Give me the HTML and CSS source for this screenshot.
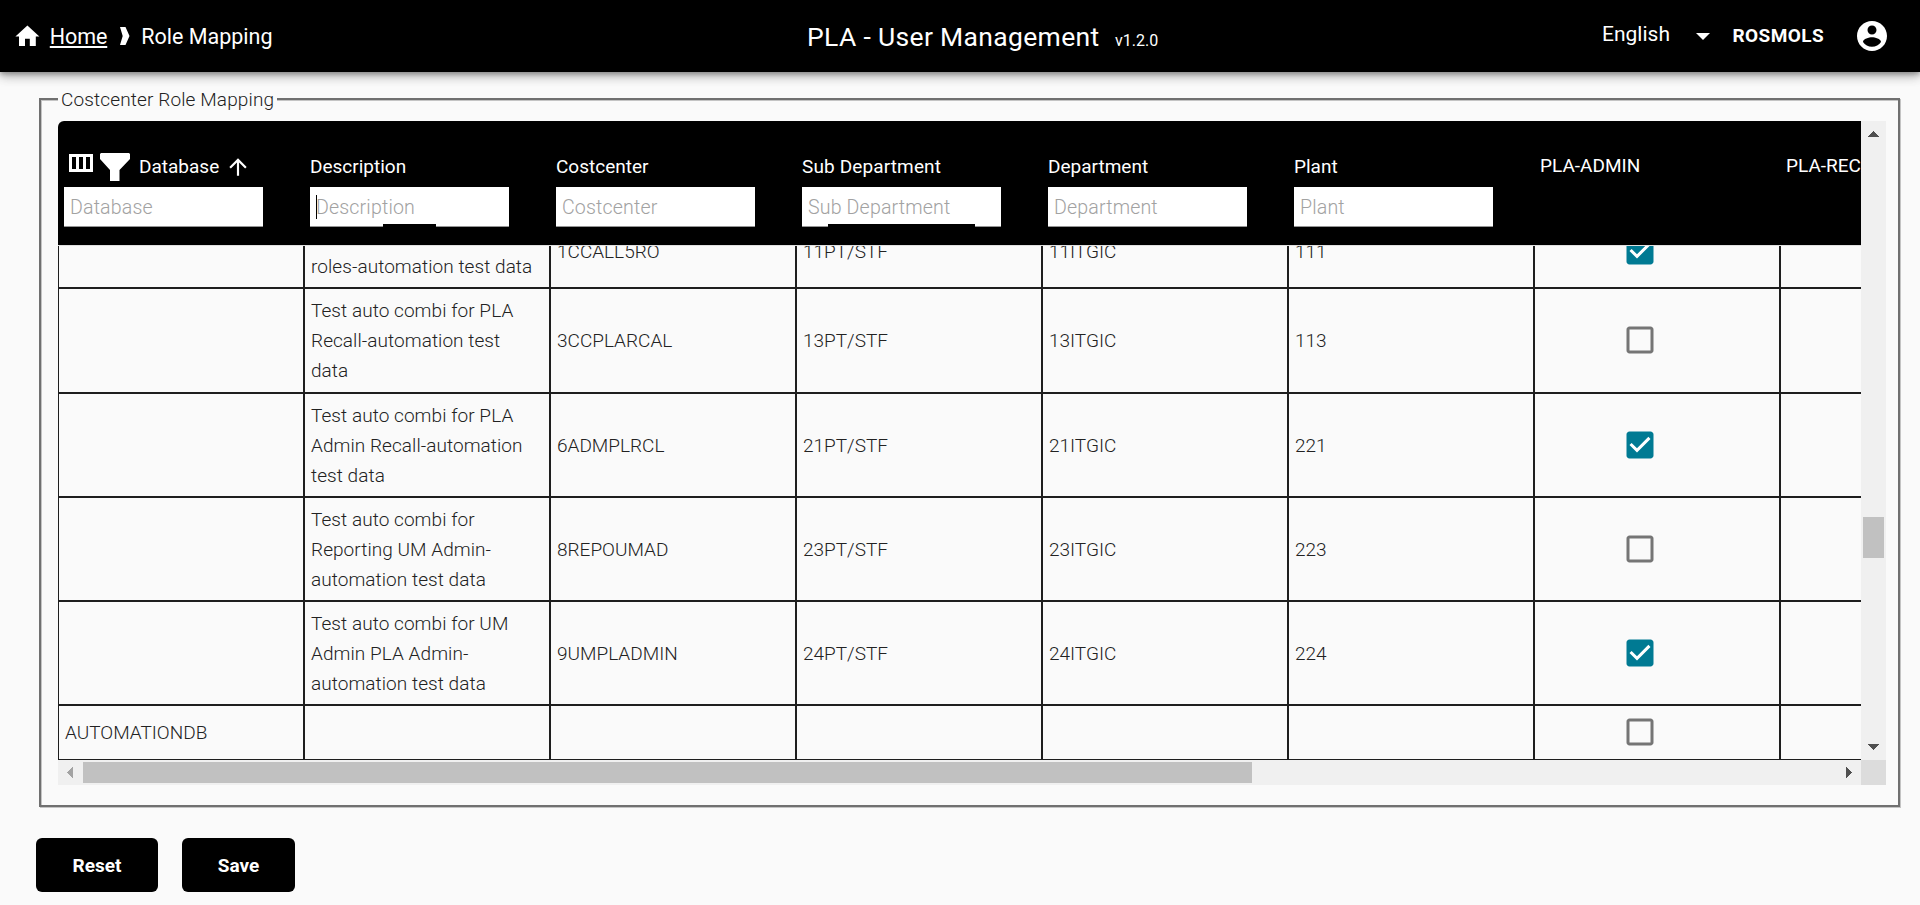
FILE: index.html
```html
<!DOCTYPE html>
<html lang="en">
<head>
<meta charset="utf-8">
<title>PLA - User Management</title>
<link rel="stylesheet" href="styles.css">
</head>
<body>
<svg width="0" height="0" class="defs">
  <symbol id="off" viewBox="0 0 24 24"><path fill="#757575" d="M19 5v14H5V5h14m0-2H5c-1.1 0-2 .9-2 2v14c0 1.1.9 2 2 2h14c1.1 0 2-.9 2-2V5c0-1.1-.9-2-2-2z"/></symbol>
  <symbol id="on" viewBox="0 0 24 24"><path fill="#fff" d="M4.500 6h15v12h-15z"/><path fill="#007a93" d="M19 3H5c-1.11 0-2 .9-2 2v14c0 1.1.89 2 2 2h14c1.11 0 2-.9 2-2V5c0-1.1-.89-2-2-2zm-9 14l-5-5 1.410-1.410L10 14.170l7.590-7.590L19 8l-9 9z"/></symbol>
</svg>
<header class="appbar">
  <nav class="crumbs">
    <svg class="home-icon" viewBox="0 0 24 24" fill="#fff"><path d="M10 20v-6h4v6h5v-8h3L12 3 2 12h3v8z"/></svg>
    <a class="crumb-link" href="#">Home</a>
    <svg class="chevron" viewBox="0 0 10 18" fill="#fff"><path d="M0 0h5.500l4 9-4 9H0l2.700-9z"/></svg>
    <span class="crumb-here">Role Mapping</span>
  </nav>
  <div class="brand"><h1 class="title">PLA - User Management</h1><span class="version">v1.2.0</span></div>
  <div class="account">
    <span class="lang">English</span>
    <svg class="caret-down" viewBox="0 0 14 7" fill="#fff"><path d="M0 0h14L7 7z"/></svg>
    <span class="user">ROSMOLS</span>
    <svg class="avatar" viewBox="0 0 24 24" fill="#fff"><path d="M12 2C6.480 2 2 6.480 2 12s4.480 10 10 10 10-4.480 10-10S17.520 2 12 2zm0 3c1.660 0 3 1.340 3 3s-1.340 3-3 3-3-1.340-3-3 1.340-3 3-3zm0 14.200c-2.500 0-4.710-1.280-6-3.220.030-1.990 4-3.080 6-3.080 1.990 0 5.970 1.090 6 3.080-1.290 1.940-3.500 3.220-6 3.220z"/></svg>
  </div>
</header>

<fieldset class="panel">
  <legend class="legend">Costcenter Role Mapping</legend>
  <div class="scroller">
    <div class="table">
      <div class="thead">
        <div class="th">
          <div class="th-title">
            <svg class="cols-icon" viewBox="0 0 24 18"><path fill="#fff" fill-rule="evenodd" d="M0 0h24v18H0zM3 3v12h4V3zM10 3v12h4V3zM17 3v12h4V3z"/></svg>
            <svg class="funnel-icon" viewBox="0 0 30 28"><path fill="#fff" d="M1 0h28l1 1v5L19.500 17v11H10V17L0 6V1z"/></svg>
            <span>Database</span>
            <svg class="sort-icon" viewBox="0 0 24 24" fill="#fff"><path d="M4 12l1.410 1.410L11 7.830V20h2V7.830l5.580 5.590L20 12l-8-8-8 8z"/></svg>
          </div>
          <div class="filter">Database</div>
        </div>
        <div class="th"><div class="th-title">Description</div><div class="filter focused">Description<i class="mark mark-desc"></i></div></div>
        <div class="th"><div class="th-title">Costcenter</div><div class="filter">Costcenter</div></div>
        <div class="th"><div class="th-title th-wide">Sub Department</div><div class="filter">Sub Department<i class="mark mark-sub"></i></div></div>
        <div class="th"><div class="th-title">Department</div><div class="filter">Department</div></div>
        <div class="th"><div class="th-title">Plant</div><div class="filter">Plant</div></div>
        <div class="th th-role"><div class="th-title">PLA-ADMIN</div></div>
        <div class="th th-role"><div class="th-title">PLA-RECALL</div></div>
      </div>
      <div class="tbody">
        <div class="tr two"><div class="td"></div><div class="td"><p><br>roles-automation test data</p></div><div class="td">1CCALL5RO</div><div class="td">11PT/STF</div><div class="td">11ITGIC</div><div class="td">111</div><div class="td chk"><svg><use href="#on"/></svg></div><div class="td"></div></div>
        <div class="tr first"><div class="td"></div><div class="td"><p>Test auto combi for PLA<br>Recall-automation test<br>data</p></div><div class="td">3CCPLARCAL</div><div class="td">13PT/STF</div><div class="td">13ITGIC</div><div class="td">113</div><div class="td chk"><svg><use href="#off"/></svg></div><div class="td"></div></div>
        <div class="tr"><div class="td"></div><div class="td"><p>Test auto combi for PLA<br>Admin Recall-automation<br>test data</p></div><div class="td">6ADMPLRCL</div><div class="td">21PT/STF</div><div class="td">21ITGIC</div><div class="td">221</div><div class="td chk"><svg><use href="#on"/></svg></div><div class="td"></div></div>
        <div class="tr"><div class="td"></div><div class="td"><p>Test auto combi for<br>Reporting UM Admin-<br>automation test data</p></div><div class="td">8REPOUMAD</div><div class="td">23PT/STF</div><div class="td">23ITGIC</div><div class="td">223</div><div class="td chk"><svg><use href="#off"/></svg></div><div class="td"></div></div>
        <div class="tr"><div class="td"></div><div class="td"><p>Test auto combi for UM<br>Admin PLA Admin-<br>automation test data</p></div><div class="td">9UMPLADMIN</div><div class="td">24PT/STF</div><div class="td">24ITGIC</div><div class="td">224</div><div class="td chk"><svg><use href="#on"/></svg></div><div class="td"></div></div>
        <div class="tr last"><div class="td">AUTOMATIONDB</div><div class="td"></div><div class="td"></div><div class="td"></div><div class="td"></div><div class="td"></div><div class="td chk"><svg><use href="#off"/></svg></div><div class="td"></div></div>
      </div>
    </div>
    <div class="vbar">
      <svg class="sb-btn" viewBox="0 0 25 25" shape-rendering="crispEdges"><path fill="#505050" d="M7 16h11l-5.500-6z"/></svg>
      <div class="vthumb"></div>
      <svg class="sb-btn" viewBox="0 0 25 25" shape-rendering="crispEdges"><path fill="#505050" d="M7 9h11l-5.500 6z"/></svg>
    </div>
    <div class="hbar">
      <svg class="sb-btn" viewBox="0 0 25 25" shape-rendering="crispEdges"><path fill="#a3a3a3" d="M15 7v11l-6-5.500z"/></svg>
      <div class="hthumb"></div>
      <svg class="sb-btn" viewBox="0 0 25 25" shape-rendering="crispEdges"><path fill="#505050" d="M10 7v11l6-5.500z"/></svg>
    </div>
    <div class="corner"></div>
  </div>
</fieldset>

<div class="actions"><button class="btn reset">Reset</button><button class="btn save">Save</button></div>
</body>
</html>
```
FILE: styles.css
```css
* { box-sizing: border-box; }
body {
  margin: 0;
  height: 905px;
  overflow: hidden;
  background: #fafafa;
  color: #222;
  font: 300 19px/22px Roboto, "Liberation Sans", sans-serif;
}
svg { display: block; flex: none; }
p { margin: 0; letter-spacing: .06px; }
.defs { display: none; }

.appbar {
  height: 72px;
  display: flex;
  justify-content: space-between;
  background: #000;
  color: #fff;
  font-weight: 400;
  white-space: nowrap;
  box-shadow: 0 2px 5px rgba(0,0,0,.3), 0 5px 10px rgba(0,0,0,.2), 0 1px 14px rgba(0,0,0,.12);
}
.crumbs { display: flex; align-items: center; padding-left: 12.6px; width: 807px; font-size: 21.500px; line-height: 72px; }
.home-icon { width: 28.8px; height: 28.8px; margin-right: 8.400px; }
.crumb-link { color: #fff; text-decoration: underline; text-decoration-thickness: 2px; text-underline-offset: 2px; text-decoration-skip-ink: none; letter-spacing: -.1px; width: 58px; padding-top: 1px; }
.chevron { width: 10px; height: 18px; margin-left: 12px; margin-right: 11.500px; }
.crumb-here { padding-top: 1px; }
.brand { display: flex; align-items: baseline; flex: 1; line-height: 73px; }
.title { margin: 0; font-size: 26.500px; font-weight: 400; letter-spacing: .33px; width: 308px; line-height: 73px; }
.version { font-size: 16px; }
.account { display: flex; align-items: center; width: 318px; line-height: 72px; }
.lang { font-size: 21px; width: 94px; line-height: 68px; align-self: flex-start; }
.caret-down { width: 14px; height: 7px; margin-right: 22.500px; }
.user { font-size: 19px; font-weight: 700; letter-spacing: .4px; width: 121.500px; line-height: 71px; align-self: flex-start; }
.avatar { width: 36px; height: 36px; }

.panel {
  margin: 16px 20px 0 39px;
  padding: 11px 12px 20px 17px;
  border: 2px solid #707070;
  box-shadow: 1px 1px 0 #c4c4c4, inset 1px 1px 0 #c4c4c4;
  min-width: 0;
}
.legend { width: 219px; height: 22px; padding: 0 0 0 3px; background: #fafafa; line-height: 24px; letter-spacing: .13px; white-space: nowrap; }
.scroller { display: grid; grid-template: 639px 25px / 1803px 25px; }

.table { overflow: hidden; border-top-left-radius: 6px; }
.thead { display: flex; height: 124px; background: #000; color: #fff; font-weight: 400; }
.th { flex: none; width: 246px; padding: 30px 0 0 6px; }
.th-role { padding-top: 29px; }
.th-title { display: flex; height: 30px; line-height: 32px; white-space: nowrap; }
.th-wide { letter-spacing: .13px; }
.cols-icon { width: 24px; height: 18px; margin: 3px 7px 0 5px; }
.funnel-icon { width: 30px; height: 28px; margin: 2px 9px 0 0; }
.sort-icon { width: 26px; height: 26px; margin: 3px 0 0 6px; }
.filter { position: relative; width: 199px; height: 40px; margin-top: 6px; padding: 1px 0 0 6px; border-bottom: 1px solid #949494; background: #fff; color: #a2a2a2; font-size: 19.600px; font-weight: 300; line-height: 39px; letter-spacing: .15px; }
.focused::before { content: ""; position: absolute; left: 6px; top: 8px; width: 1px; height: 24px; background: #000; }
.mark { position: absolute; top: 37px; height: 3px; background: #000; }
.mark-desc { left: 73px; width: 53px; }
.mark-sub { left: 26px; width: 147px; }

.tbody { display: flex; flex-direction: column; justify-content: flex-end; height: 515px; overflow: hidden; border-top: 1px solid #e0e0e0; }
.tr { display: flex; flex: none; height: 104px; }
.td { flex: none; width: 246px; display: flex; align-items: center; padding: 2px 0 0 6px; border: 1px solid #1e1e1e; line-height: 30px; white-space: nowrap; }
.chk { padding: 0 0 0 87px; }
.chk svg { width: 36px; height: 36px; }
.tr.two { height: 74px; }
.tr.first { height: 105px; }
.tr.last { height: 55px; }
.first .td, .last .td { padding-top: 0; }
.first .chk, .last .chk { padding-bottom: 1px; }

.vbar, .hbar { display: flex; background: #f0f0f0; }
.vbar { flex-direction: column; justify-content: space-between; }
.hbar { justify-content: space-between; }
.sb-btn { width: 25px; height: 25px; }
.vthumb { width: 21px; height: 41px; margin: 371px 2px auto; background: #c1c1c1; }
.hthumb { width: 1169px; height: 21px; margin: 2px auto 2px 0; background: #c1c1c1; }
.corner { background: #dcdcdc; }

.actions { display: flex; gap: 24px; margin: 31px 0 0 36px; }
.btn { height: 54px; padding: 1px 0 0; border: 0; border-radius: 6px; background: #000; color: #fff; font: 700 19px/54px Roboto, "Liberation Sans", sans-serif; }
.reset { width: 122px; }
.save { width: 113px; }
```
